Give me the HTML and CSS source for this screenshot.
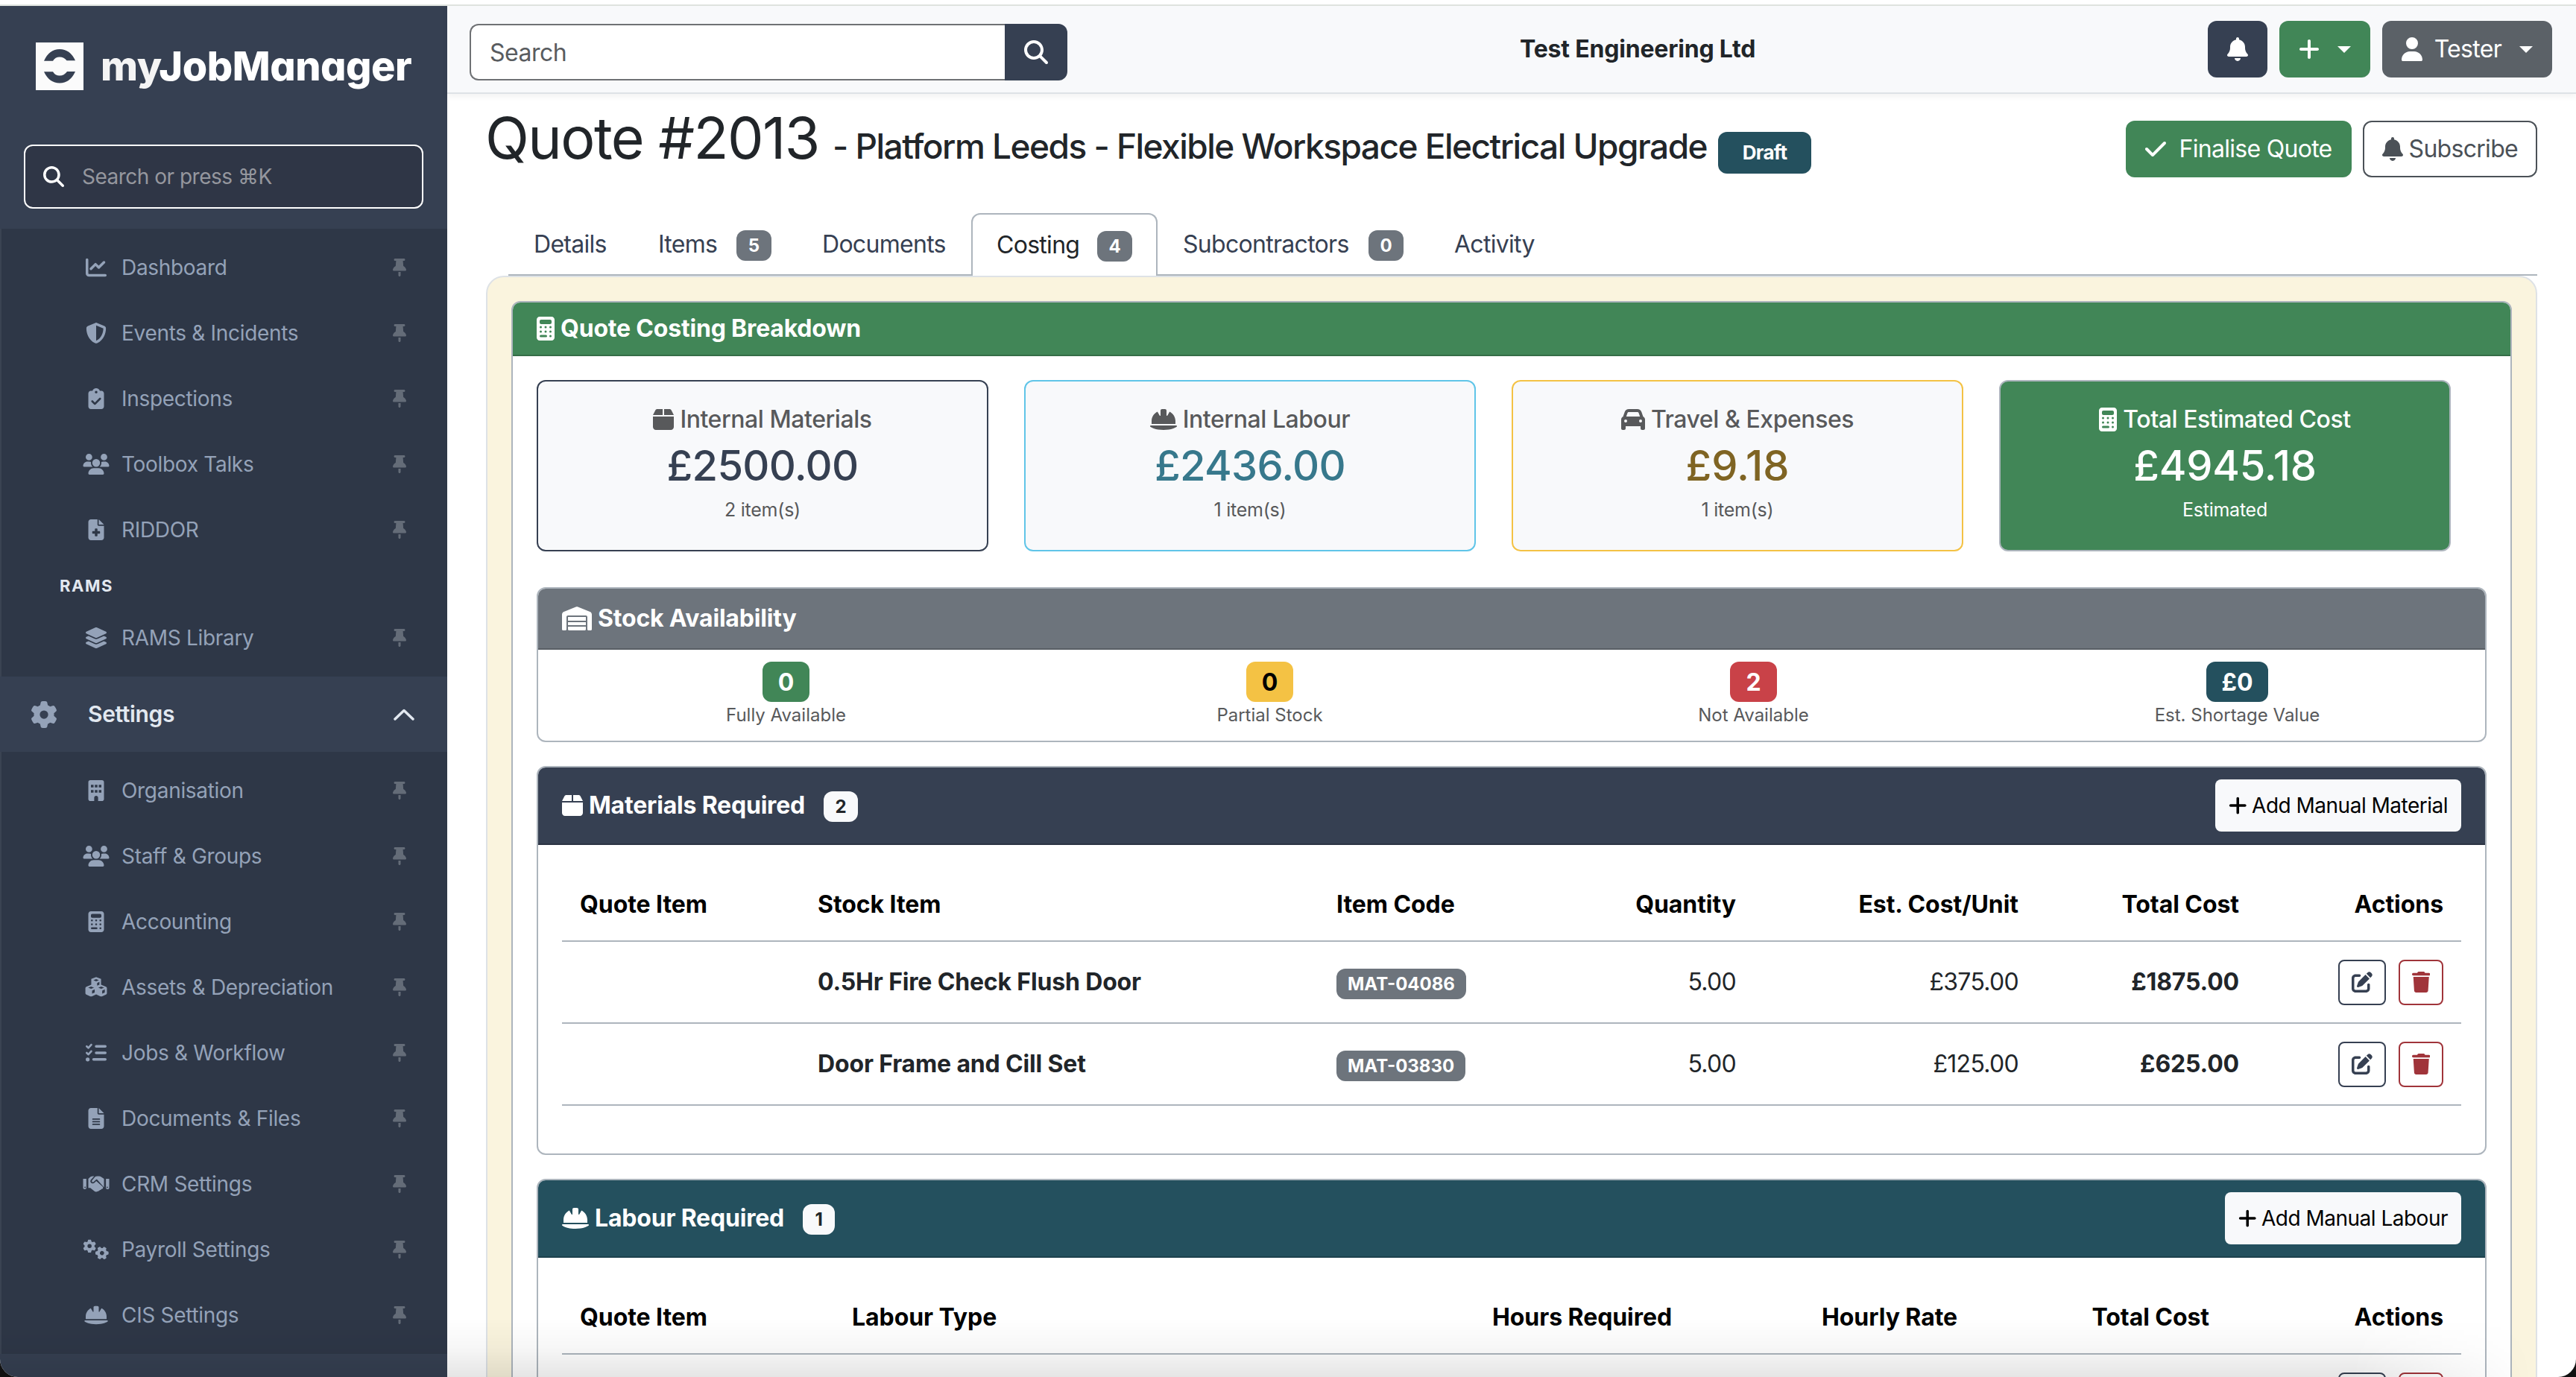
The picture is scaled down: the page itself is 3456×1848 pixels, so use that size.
FILE: index.html
```
<!DOCTYPE html>
<html lang="en">
<head>
    <meta charset="UTF-8">
    <meta name="viewport" content="width=device-width, initial-scale=1.0">
    <title>Quote #2013 - myJobManager</title>
    <link rel="stylesheet" href="styles.css">
</head>
<body>
    <!-- icon sprite -->
    <svg class="sprite">
        <symbol id="search" viewBox="0 0 512 512"><path d="M416 208c0 45.9-14.9 88.3-40 122.7L502.6 457.4c12.5 12.5 12.5 32.8 0 45.3s-32.8 12.5-45.3 0L330.7 376c-34.4 25.2-76.8 40-122.7 40C93.1 416 0 322.9 0 208S93.1 0 208 0S416 93.1 416 208zM208 352a144 144 0 1 0 0-288 144 144 0 1 0 0 288z"/></symbol>
        <symbol id="chart" viewBox="0 0 512 512"><path d="M64 64c0-17.7-14.3-32-32-32S0 46.3 0 64V400c0 44.2 35.8 80 80 80H480c17.7 0 32-14.3 32-32s-14.3-32-32-32H80c-8.8 0-16-7.2-16-16V64zm406.6 86.6c12.5-12.5 12.5-32.8 0-45.3s-32.8-12.5-45.3 0L320 210.7l-57.4-57.4c-12.5-12.5-32.8-12.5-45.3 0l-112 112c-12.5 12.5-12.5 32.8 0 45.3s32.8 12.5 45.3 0L240 221.3l57.4 57.4c12.5 12.5 32.8 12.5 45.3 0l128-128z"/></symbol>
        <symbol id="shield" viewBox="0 0 512 512"><path d="M256 0c4.6 0 9.2 1 13.4 2.9L457.7 82.8c22 9.3 38.4 31 38.3 57.2c-.5 99.2-41.3 280.7-213.6 363.2c-16.7 8-36.1 8-52.8 0C57.3 420.7 16.5 239.2 16 140c-.1-26.2 16.3-47.9 38.3-57.2L242.7 2.9C246.8 1 251.4 0 256 0zm0 66.8V444.8C394 378 431.1 230.1 432 141.4L256 66.8z"/></symbol>
        <symbol id="clipboard" viewBox="0 0 384 512"><path d="M192 0c-41.8 0-77.4 26.7-90.5 64H64C28.7 64 0 92.7 0 128V448c0 35.3 28.7 64 64 64H320c35.3 0 64-28.7 64-64V128c0-35.3-28.7-64-64-64H282.5C269.4 26.7 233.8 0 192 0zm0 64a32 32 0 1 1 0 64 32 32 0 1 1 0-64zM305 273L177 401c-9.4 9.4-24.6 9.4-33.9 0L79 337c-9.4-9.4-9.4-24.6 0-33.9s24.6-9.4 33.9 0l47 47L271 239c9.4-9.4 24.6-9.4 33.9 0s9.4 24.6 0 33.9z"/></symbol>
        <symbol id="users" viewBox="0 0 640 512"><path d="M144 0a80 80 0 1 1 0 160A80 80 0 1 1 144 0zM512 0a80 80 0 1 1 0 160A80 80 0 1 1 512 0zM0 298.7C0 239.8 47.8 192 106.7 192h42.7c15.9 0 31 3.5 44.6 9.7c-1.3 7.2-1.9 14.7-1.9 22.3c0 38.2 16.8 72.5 43.3 96H21.3C9.6 320 0 310.4 0 298.7zM405.3 320c26.6-23.5 43.3-57.8 43.3-96c0-7.6-.7-15-1.9-22.3c13.6-6.3 28.7-9.7 44.6-9.7h42.7C592.2 192 640 239.8 640 298.7c0 11.8-9.6 21.3-21.3 21.3H405.3zM224 224a96 96 0 1 1 192 0 96 96 0 1 1 -192 0zM128 485.3C128 411.7 187.7 352 261.3 352H378.7C452.3 352 512 411.7 512 485.3c0 14.7-11.9 26.7-26.7 26.7H154.7c-14.7 0-26.7-11.9-26.7-26.7z"/></symbol>
        <symbol id="file-plus" viewBox="0 0 384 512"><path d="M64 0C28.7 0 0 28.7 0 64V448c0 35.3 28.7 64 64 64H320c35.3 0 64-28.7 64-64V160H256c-17.7 0-32-14.3-32-32V0H64zM256 0V128H384L256 0zM160 240c0-8.8 7.2-16 16-16h32c8.8 0 16 7.2 16 16v48h48c8.8 0 16 7.2 16 16v32c0 8.8-7.2 16-16 16H224v48c0 8.8-7.2 16-16 16H176c-8.8 0-16-7.2-16-16V352H112c-8.8 0-16-7.2-16-16V304c0-8.8 7.2-16 16-16h48V240z"/></symbol>
        <symbol id="layers" viewBox="0 0 576 512"><path d="M264.5 5.2c14.9-6.9 32.1-6.9 47 0l218.6 101c8.5 3.9 13.9 12.4 13.9 21.8s-5.4 17.9-13.9 21.8l-218.6 101c-14.9 6.9-32.1 6.9-47 0L45.9 149.8C37.4 145.8 32 137.3 32 128s5.4-17.9 13.9-21.8L264.5 5.2zM476.9 209.6l53.2 24.6c8.5 3.9 13.9 12.4 13.9 21.8s-5.4 17.9-13.9 21.8l-218.6 101c-14.9 6.9-32.1 6.9-47 0L45.9 277.8C37.4 273.8 32 265.3 32 256s5.4-17.9 13.9-21.8l53.2-24.6 152 70.2c23.4 10.8 50.4 10.8 73.8 0l152-70.2zm-152 198.2l152-70.2 53.2 24.6c8.5 3.9 13.9 12.4 13.9 21.8s-5.4 17.9-13.9 21.8l-218.6 101c-14.9 6.9-32.1 6.9-47 0L45.9 405.8C37.4 401.8 32 393.3 32 384s5.4-17.9 13.9-21.8l53.2-24.6 152 70.2c23.4 10.8 50.4 10.8 73.8 0z"/></symbol>
        <symbol id="pin" viewBox="0 0 384 512"><path d="M32 32C32 14.3 46.3 0 64 0H320c17.7 0 32 14.3 32 32s-14.3 32-32 32H290.5l11.4 148.2c36.7 19.9 65.7 53.2 79.5 94.7l1 3c3.3 9.8 1.6 20.5-4.4 28.8s-15.7 13.3-26 13.3H32c-10.3 0-19.9-4.9-26-13.3s-7.7-19.1-4.4-28.8l1-3c13.8-41.5 42.8-74.8 79.5-94.7L93.5 64H64C46.3 64 32 49.7 32 32zM160 384h64v96c0 17.7-14.3 32-32 32s-32-14.3-32-32V384z"/></symbol>
        <symbol id="gear" viewBox="0 0 512 512"><path d="M495.9 166.6c3.2 8.7 .5 18.4-6.4 24.6l-43.3 39.4c1.1 8.3 1.7 16.8 1.7 25.4s-.6 17.1-1.7 25.4l43.3 39.4c6.9 6.2 9.6 15.9 6.4 24.6c-4.4 11.9-9.7 23.3-15.8 34.3l-4.7 8.1c-6.6 11-14 21.4-22.1 31.2c-5.9 7.2-15.7 9.6-24.5 6.8l-55.7-17.7c-13.4 10.3-28.2 18.9-44 25.4l-12.5 57.1c-2 9.1-9 16.3-18.2 17.8c-13.8 2.3-28 3.5-42.5 3.5s-28.7-1.2-42.5-3.5c-9.2-1.5-16.2-8.7-18.2-17.8l-12.5-57.1c-15.8-6.5-30.6-15.1-44-25.4L83.1 425.9c-8.8 2.8-18.6 .3-24.5-6.8c-8.1-9.8-15.5-20.2-22.1-31.2l-4.7-8.1c-6.1-11-11.4-22.4-15.8-34.3c-3.2-8.7-.5-18.4 6.4-24.6l43.3-39.4C64.6 273.1 64 264.6 64 256s.6-17.1 1.7-25.4L22.4 191.2c-6.9-6.2-9.6-15.9-6.4-24.6c4.4-11.9 9.7-23.3 15.8-34.3l4.7-8.1c6.6-11 14-21.4 22.1-31.2c5.9-7.2 15.7-9.6 24.5-6.8l55.7 17.7c13.4-10.3 28.2-18.9 44-25.4l12.5-57.1c2-9.1 9-16.3 18.2-17.8C227.3 1.2 241.5 0 256 0s28.7 1.2 42.5 3.5c9.2 1.5 16.2 8.7 18.2 17.8l12.5 57.1c15.8 6.5 30.6 15.1 44 25.4l55.7-17.7c8.8-2.8 18.6-.3 24.5 6.8c8.1 9.8 15.5 20.2 22.1 31.2l4.7 8.1c6.1 11 11.4 22.4 15.8 34.3zM256 336a80 80 0 1 0 0-160 80 80 0 1 0 0 160z"/></symbol>
        <symbol id="cogs" viewBox="0 0 640 512"><use href="#gear" x="-4" y="9" width="324" height="324"/><use href="#gear" x="301" y="179" width="324" height="324" transform="rotate(30 463 341)"/></symbol>
        <symbol id="building" viewBox="0 0 384 512"><path d="M48 0C21.5 0 0 21.5 0 48V464c0 26.5 21.5 48 48 48h96V432c0-26.5 21.5-48 48-48s48 21.5 48 48v80h96c26.5 0 48-21.5 48-48V48c0-26.5-21.5-48-48-48H48zM64 240h64v64H64zM160 240h64v64H160zM256 240h64v64H256zM64 112h64v64H64zM160 112h64v64H160zM256 112h64v64H256z"/></symbol>
        <symbol id="calculator" viewBox="0 0 384 512"><path d="M64 0C28.7 0 0 28.7 0 64V448c0 35.3 28.7 64 64 64H320c35.3 0 64-28.7 64-64V64c0-35.3-28.7-64-64-64H64zM96 64H288c17.7 0 32 14.3 32 32v32c0 17.7-14.3 32-32 32H96c-17.7 0-32-14.3-32-32V96c0-17.7 14.3-32 32-32zM88 200a24 24 0 1 1 0 48 24 24 0 1 1 0-48zM192 200a24 24 0 1 1 0 48 24 24 0 1 1 0-48zM296 200a24 24 0 1 1 0 48 24 24 0 1 1 0-48zM88 296a24 24 0 1 1 0 48 24 24 0 1 1 0-48zM192 296a24 24 0 1 1 0 48 24 24 0 1 1 0-48zM296 296a24 24 0 1 1 0 48 24 24 0 1 1 0-48zM88 392H200a24 24 0 1 1 0 48H88a24 24 0 1 1 0-48zM296 392a24 24 0 1 1 0 48 24 24 0 1 1 0-48z"/></symbol>
        <symbol id="cubes" viewBox="0 0 576 512"><path d="M288 4L408 52V190L528 240Q552 250 552 276V400Q552 424 530 434L430 478Q412 486 394 478L288 430L182 478Q164 486 146 478L46 434Q24 424 24 400V276Q24 250 48 240L168 190V52zM288 54L222 80L288 108L354 80zM312 150V214L368 190V124zM164 236L92 264L164 294L236 264zM188 336V412L252 384V308zM412 236L340 264L412 294L484 264zM436 336V412L500 384V308z"/></symbol>
        <symbol id="tasks" viewBox="0 0 512 512"><path d="M152 38c10 9 11 24 2 34L82 152a24 24 0 0 1-35 1L7 113a24 24 0 0 1 34-34l22 22 55-61c9-10 24-11 34-2zM152 198c10 9 11 24 2 34L82 312a24 24 0 0 1-35 1L7 273a24 24 0 0 1 34-34l22 22 55-61c9-10 24-11 34-2zM256 64H480a32 32 0 0 1 0 64H256a32 32 0 0 1 0-64zM256 224H480a32 32 0 0 1 0 64H256a32 32 0 0 1 0-64zM192 384H480a32 32 0 0 1 0 64H192a32 32 0 0 1 0-64zM48 368a48 48 0 1 1 0 96 48 48 0 1 1 0-96z"/></symbol>
        <symbol id="file-lines" viewBox="0 0 384 512"><path d="M64 0C28.7 0 0 28.7 0 64V448c0 35.3 28.7 64 64 64H320c35.3 0 64-28.7 64-64V160H256c-17.7 0-32-14.3-32-32V0H64zM256 0V128H384L256 0zM112 256H272a16 16 0 0 1 0 32H112a16 16 0 0 1 0-32zM112 320H272a16 16 0 0 1 0 32H112a16 16 0 0 1 0-32zM112 384H272a16 16 0 0 1 0 32H112a16 16 0 0 1 0-32z"/></symbol>
        <symbol id="handshake" viewBox="0 0 640 512"><path d="M0 128H80V352a32 32 0 0 1-32 32H32a32 32 0 0 1-32-32zM48 320a16 16 0 1 0 0 32 16 16 0 1 0 0-32zM560 128H640V352a32 32 0 0 1-32 32H592a32 32 0 0 1-32-32zM592 320a16 16 0 1 0 0 32 16 16 0 1 0 0-32zM128 128L176 84Q204 64 250 64H272L196 146C164 180 178 232 226 240Q256 244 280 222L322 184L478 322Q500 342 484 366Q470 382 448 378Q444 404 408 406Q396 432 362 434Q320 458 286 440L176 352H128zM290 84Q314 64 350 64H390Q420 64 444 80L512 128V336L344 148Q332 138 320 148L256 204Q234 218 218 200Q206 184 222 166z"/></symbol>
        <symbol id="helmet" viewBox="0 0 576 512"><path d="M256 32c-17.7 0-32 14.3-32 32v102c0 5.6-4.5 10-10 10c-3.6 0-7-1.9-8.8-5.1L157.1 87C83 123.5 32 199.8 32 288v64H544l0-66.4c-.9-87.2-51.7-162.4-125.1-198.6l-48 83.9c-1.8 3.2-5.2 5.1-8.8 5.1c-5.6 0-10.1-4.5-10.1-10.1V64c0-17.7-14.3-32-32-32H256zM16.6 384C7.4 384 0 391.4 0 400.6c0 4.7 2 9.2 5.8 11.9C27.5 428.4 111.8 480 288 480s260.5-51.6 282.2-67.5c3.8-2.8 5.8-7.2 5.8-11.9c0-9.2-7.4-16.6-16.6-16.6H16.6z"/></symbol>
        <symbol id="box" viewBox="0 0 448 512"><path d="M50.7 58.5L0 160H208V32H93.7C75.5 32 58.9 42.3 50.7 58.5zM240 160H448L397.3 58.5C389.1 42.3 372.5 32 354.3 32H240V160zm208 32H0V416c0 35.3 28.7 64 64 64H384c35.3 0 64-28.7 64-64V192z"/></symbol>
        <symbol id="car" viewBox="0 0 512 512"><path d="M135.2 117.4L109.1 192H402.9l-26.1-74.6C372.3 104.6 360.2 96 346.6 96H165.4c-13.6 0-25.7 8.6-30.2 21.4zM39.6 196.8L74.8 96.3C88.3 57.8 124.6 32 165.4 32H346.6c40.8 0 77.1 25.8 90.6 64.3l35.2 100.5c23.2 9.6 39.6 32.5 39.6 59.2V448c0 17.7-14.3 32-32 32H448c-17.7 0-32-14.3-32-32V400H96v48c0 17.7-14.3 32-32 32H32c-17.7 0-32-14.3-32-32V256c0-26.7 16.4-49.6 39.6-59.2zM128 288a32 32 0 1 0 -64 0 32 32 0 1 0 64 0zm288 32a32 32 0 1 0 0-64 32 32 0 1 0 0 64z"/></symbol>
        <symbol id="warehouse" viewBox="0 0 640 512"><path d="M0 488V171.3c0-26.2 15.9-49.7 40.2-59.4L308.1 4.8c7.6-3.1 16.1-3.1 23.8 0L599.8 111.9c24.3 9.7 40.2 33.3 40.2 59.4V488c0 13.3-10.7 24-24 24H568c-13.3 0-24-10.7-24-24V224c0-17.7-14.3-32-32-32H128c-17.7 0-32 14.3-32 32V488c0 13.3-10.7 24-24 24H24c-13.3 0-24-10.7-24-24zm488 24l-336 0c-13.3 0-24-10.7-24-24V432H512l0 56c0 13.3-10.7 24-24 24zM128 400V336H512v64H128zm0-96V224H512l0 80H128z"/></symbol>
        <symbol id="bell" viewBox="0 0 448 512"><path d="M224 0c-17.7 0-32 14.3-32 32V51.2C119 66 64 130.6 64 208v18.8c0 47-17.3 92.4-48.5 127.6l-7.4 8.3c-8.4 9.4-10.4 22.9-5.3 34.4S19.4 416 32 416H416c12.6 0 24-7.4 29.2-18.9s3.1-25-5.3-34.4l-7.4-8.3C401.3 319.2 384 273.9 384 226.8V208c0-77.4-55-142-128-156.8V32c0-17.7-14.3-32-32-32zm45.3 493.3c12-12 18.7-28.3 18.7-45.3H160c0 17 6.7 33.3 18.7 45.3s28.3 18.7 45.3 18.7s33.3-6.7 45.3-18.7z"/></symbol>
        <symbol id="user" viewBox="0 0 448 512"><path d="M224 256A128 128 0 1 0 224 0a128 128 0 1 0 0 256zm-45.7 48C79.8 304 0 383.8 0 482.3C0 498.7 13.3 512 29.7 512H418.3c16.4 0 29.7-13.3 29.7-29.7C448 383.8 368.2 304 269.7 304H178.3z"/></symbol>
        <symbol id="plus" viewBox="0 0 448 512"><path d="M256 80c0-17.7-14.3-32-32-32s-32 14.3-32 32V224H48c-17.7 0-32 14.3-32 32s14.3 32 32 32H192V432c0 17.7 14.3 32 32 32s32-14.3 32-32V288H400c17.7 0 32-14.3 32-32s-14.3-32-32-32H256V80z"/></symbol>
        <symbol id="check" viewBox="0 0 448 512"><path d="M438.6 105.4c12.5 12.5 12.5 32.8 0 45.3l-256 256c-12.5 12.5-32.8 12.5-45.3 0l-128-128c-12.5-12.5-12.5-32.8 0-45.3s32.8-12.5 45.3 0L160 338.7 393.4 105.4c12.5-12.5 32.8-12.5 45.3 0z"/></symbol>
        <symbol id="trash" viewBox="0 0 448 512"><path d="M135.2 17.7L128 32H32C14.3 32 0 46.3 0 64S14.3 96 32 96H416c17.7 0 32-14.3 32-32s-14.3-32-32-32H320l-7.2-14.3C307.4 6.8 296.3 0 284.2 0H163.8c-12.1 0-23.2 6.8-28.6 17.7zM416 128H32L53.2 467c1.6 25.3 22.6 45 47.9 45H346.9c25.3 0 46.3-19.7 47.9-45L416 128z"/></symbol>
        <symbol id="edit" viewBox="0 0 512 512"><path d="M471.6 21.7c-21.9-21.9-57.3-21.9-79.2 0L362.3 51.7l97.9 97.9 30.1-30.1c21.9-21.9 21.9-57.3 0-79.2L471.6 21.7zm-299.2 220c-6.1 6.1-10.8 13.6-13.5 21.9l-29.6 88.8c-2.9 8.6-.6 18.1 5.8 24.6s15.9 8.7 24.6 5.8l88.8-29.6c8.2-2.7 15.7-7.4 21.9-13.5L437.7 172.3 339.7 74.3 172.4 241.7zM96 64C43 64 0 107 0 160V416c0 53 43 96 96 96H352c53 0 96-43 96-96V320c0-17.7-14.3-32-32-32s-32 14.3-32 32v96c0 17.7-14.3 32-32 32H96c-17.7 0-32-14.3-32-32V160c0-17.7 14.3-32 32-32h96c17.7 0 32-14.3 32-32s-14.3-32-32-32H96z"/></symbol>
    </svg>

    <div class="app">
        <aside class="sidebar">
            <div class="sidebar-header">
                <div class="brand">
                    <svg class="brand-mark" viewBox="0 0 64 64"><path d="M11 24.7Q18 9 32 9T53 24.3H41.5Q38 19.5 32 19.5T23 24.7zM11 39.3H23Q26 44.5 32 44.5T42 39H53Q46 54.5 32 54.5T11 39.3z"/></svg>
                    <span class="brand-name"><span class="brand-my">my</span>JobManager</span>
                </div>
                <div class="sidebar-search"><svg class="icon"><use href="#search"/></svg><span>Search or press ⌘K</span></div>
            </div>

            <ul class="menu">
                <li><svg class="icon"><use href="#chart"/></svg><span>Dashboard</span><svg class="pin"><use href="#pin"/></svg></li>
                <li><svg class="icon"><use href="#shield"/></svg><span>Events &amp; Incidents</span><svg class="pin"><use href="#pin"/></svg></li>
                <li><svg class="icon"><use href="#clipboard"/></svg><span>Inspections</span><svg class="pin"><use href="#pin"/></svg></li>
                <li><svg class="icon"><use href="#users"/></svg><span>Toolbox Talks</span><svg class="pin"><use href="#pin"/></svg></li>
                <li><svg class="icon"><use href="#file-plus"/></svg><span>RIDDOR</span><svg class="pin"><use href="#pin"/></svg></li>
                <li class="menu-label">RAMS</li>
                <li><svg class="icon"><use href="#layers"/></svg><span>RAMS Library</span><svg class="pin"><use href="#pin"/></svg></li>
            </ul>

            <div class="menu-section">
                <svg class="icon"><use href="#gear"/></svg>
                <span>Settings</span>
                <svg class="chevron" viewBox="0 0 28 16"><path d="M2 14L14 2.5L26 14"/></svg>
            </div>

            <ul class="menu">
                <li><svg class="icon"><use href="#building"/></svg><span>Organisation</span><svg class="pin"><use href="#pin"/></svg></li>
                <li><svg class="icon"><use href="#users"/></svg><span>Staff &amp; Groups</span><svg class="pin"><use href="#pin"/></svg></li>
                <li><svg class="icon"><use href="#calculator"/></svg><span>Accounting</span><svg class="pin"><use href="#pin"/></svg></li>
                <li><svg class="icon"><use href="#cubes"/></svg><span>Assets &amp; Depreciation</span><svg class="pin"><use href="#pin"/></svg></li>
                <li><svg class="icon"><use href="#tasks"/></svg><span>Jobs &amp; Workflow</span><svg class="pin"><use href="#pin"/></svg></li>
                <li><svg class="icon"><use href="#file-lines"/></svg><span>Documents &amp; Files</span><svg class="pin"><use href="#pin"/></svg></li>
                <li><svg class="icon"><use href="#handshake"/></svg><span>CRM Settings</span><svg class="pin"><use href="#pin"/></svg></li>
                <li><svg class="icon"><use href="#cogs"/></svg><span>Payroll Settings</span><svg class="pin"><use href="#pin"/></svg></li>
                <li><svg class="icon"><use href="#helmet"/></svg><span>CIS Settings</span><svg class="pin"><use href="#pin"/></svg></li>
            </ul>
        </aside>

        <main class="main">
            <header class="topbar">
                <div class="search-group">
                    <div class="search-input">Search</div>
                    <button class="search-button"><svg class="icon"><use href="#search"/></svg></button>
                </div>
                <div class="company">Test Engineering Ltd</div>
                <div class="topbar-actions">
                    <button class="btn btn-primary"><svg class="icon narrow"><use href="#bell"/></svg></button>
                    <button class="btn btn-success"><svg class="icon narrow"><use href="#plus"/></svg><i class="caret"></i></button>
                    <button class="btn btn-grey"><svg class="icon narrow"><use href="#user"/></svg><span class="user-name">Tester</span><i class="caret"></i></button>
                </div>
            </header>

            <div class="page">
                <div class="page-head">
                    <h1>Quote #2013</h1>
                    <span class="subtitle">- Platform Leeds - Flexible Workspace Electrical Upgrade</span>
                    <span class="status">Draft</span>
                    <div class="page-actions">
                        <button class="btn btn-success finalise"><svg class="icon narrow"><use href="#check"/></svg>Finalise Quote</button>
                        <button class="btn btn-outline"><svg class="icon narrow"><use href="#bell"/></svg>Subscribe</button>
                    </div>
                </div>

                <nav class="tabs">
                    <a class="tab tab-details">Details</a>
                    <a class="tab tab-items">Items <span class="badge">5</span></a>
                    <a class="tab tab-documents">Documents</a>
                    <a class="tab tab-costing active">Costing <span class="badge">4</span></a>
                    <a class="tab tab-subs">Subcontractors <span class="badge">0</span></a>
                    <a class="tab">Activity</a>
                </nav>

                <div class="tab-panel">
                    <section class="card breakdown">
                        <div class="card-header green"><svg class="icon narrow3"><use href="#calculator"/></svg>Quote Costing Breakdown</div>
                        <div class="breakdown-body">
                            <div class="metrics">
                                <div class="metric metric-primary">
                                    <div class="metric-title"><svg class="icon narrow"><use href="#box"/></svg>Internal Materials</div>
                                    <div class="metric-value">£2500.00</div>
                                    <div class="metric-note">2 item(s)</div>
                                </div>
                                <div class="metric metric-info">
                                    <div class="metric-title"><svg class="icon wide"><use href="#helmet"/></svg>Internal Labour</div>
                                    <div class="metric-value">£2436.00</div>
                                    <div class="metric-note">1 item(s)</div>
                                </div>
                                <div class="metric metric-warning">
                                    <div class="metric-title"><svg class="icon"><use href="#car"/></svg>Travel &amp; Expenses</div>
                                    <div class="metric-value">£9.18</div>
                                    <div class="metric-note">1 item(s)</div>
                                </div>
                                <div class="metric metric-total">
                                    <div class="metric-title"><svg class="icon narrow3"><use href="#calculator"/></svg>Total Estimated Cost</div>
                                    <div class="metric-value">£4945.18</div>
                                    <div class="metric-note">Estimated</div>
                                </div>
                            </div>

                            <section class="card stock">
                                <div class="card-header grey"><svg class="icon wider"><use href="#warehouse"/></svg>Stock Availability</div>
                                <div class="stock-row">
                                    <div class="stock-cell"><span class="count green">0</span><span>Fully Available</span></div>
                                    <div class="stock-cell"><span class="count yellow">0</span><span>Partial Stock</span></div>
                                    <div class="stock-cell"><span class="count red">2</span><span>Not Available</span></div>
                                    <div class="stock-cell"><span class="count teal">£0</span><span>Est. Shortage Value</span></div>
                                </div>
                            </section>

                            <section class="card materials">
                                <div class="card-header navy">
                                    <svg class="icon narrow"><use href="#box"/></svg>Materials Required
                                    <span class="badge light">2</span>
                                    <button class="btn-small"><svg class="icon narrow"><use href="#plus"/></svg>Add Manual Material</button>
                                </div>
                                <table class="table materials-table">
                                    <colgroup><col class="m1"><col class="m2"><col class="m3"><col class="m4"><col class="m5"><col class="m6"><col class="m7"></colgroup>
                                    <thead>
                                        <tr><th>Quote Item</th><th>Stock Item</th><th>Item Code</th><th class="end">Quantity</th><th class="end">Est. Cost/Unit</th><th class="end">Total Cost</th><th class="end">Actions</th></tr>
                                    </thead>
                                    <tbody>
                                        <tr>
                                            <td></td><td><b>0.5Hr Fire Check Flush Door</b></td><td><span class="badge code">MAT-04086</span></td>
                                            <td class="end">5.00</td><td class="end">£375.00</td><td class="end"><b>£1875.00</b></td>
                                            <td><div class="row-actions"><button class="act edit"><svg class="icon"><use href="#edit"/></svg></button><button class="act delete"><svg class="icon narrow"><use href="#trash"/></svg></button></div></td>
                                        </tr>
                                        <tr>
                                            <td></td><td><b>Door Frame and Cill Set</b></td><td><span class="badge code">MAT-03830</span></td>
                                            <td class="end">5.00</td><td class="end">£125.00</td><td class="end"><b>£625.00</b></td>
                                            <td><div class="row-actions"><button class="act edit"><svg class="icon"><use href="#edit"/></svg></button><button class="act delete"><svg class="icon narrow"><use href="#trash"/></svg></button></div></td>
                                        </tr>
                                    </tbody>
                                </table>
                            </section>

                            <section class="card labour">
                                <div class="card-header teal">
                                    <svg class="icon wide"><use href="#helmet"/></svg>Labour Required
                                    <span class="badge light">1</span>
                                    <button class="btn-small"><svg class="icon narrow"><use href="#plus"/></svg>Add Manual Labour</button>
                                </div>
                                <table class="table labour-table">
                                    <colgroup><col class="l1"><col class="l2"><col class="l3"><col class="l4"><col class="l5"><col class="l6"></colgroup>
                                    <thead>
                                        <tr><th>Quote Item</th><th>Labour Type</th><th class="end">Hours Required</th><th class="end">Hourly Rate</th><th class="end">Total Cost</th><th class="end">Actions</th></tr>
                                    </thead>
                                    <tbody>
                                        <tr>
                                            <td></td><td></td><td></td><td></td><td></td>
                                            <td><div class="row-actions"><button class="act edit"><svg class="icon"><use href="#edit"/></svg></button><button class="act delete"><svg class="icon narrow"><use href="#trash"/></svg></button></div></td>
                                        </tr>
                                    </tbody>
                                </table>
                            </section>
                        </div>
                    </section>
                </div>
            </div>
        </main>
        <div class="bottom-shade"></div>
    </div>
</body>
</html>
```
FILE: styles.css
```
* {
    box-sizing: border-box;
}
body {
    margin: 0;
    overflow: hidden;
    background-color: #111;
    color: #212529;
    font-family: Inter, "Liberation Sans", sans-serif;
    font-size: 32px;
    line-height: 1.5;
    letter-spacing: -0.022em;
}
button {
    font: inherit;
    letter-spacing: inherit;
    padding: 0;
    border: none;
}
.sprite {
    display: none;
}
.icon {
    width: 1em;
    height: 1em;
    flex: none;
    fill: currentColor;
    fill-rule: evenodd;
}
.icon.narrow {
    width: 0.875em;
}
.icon.narrow3 {
    width: 0.75em;
}
.icon.wide {
    width: 1.125em;
}
.icon.wider {
    width: 1.25em;
}
.app {
    display: flex;
    position: relative;
    height: 1848px;
    padding-top: 6px;
    overflow: hidden;
    background-color: #fff;
    border-radius: 0 0 24px 24px;
}

/* Sidebar */
.sidebar {
    width: 600px;
    flex: none;
    background-color: #364052;
    border-top: 2px solid #dfe3df;
    color: #94a2b8;
    font-size: 28px;
    letter-spacing: -0.011em;
}
.sidebar-header {
    height: 299px;
    padding: 49px 32px 0;
}
.brand {
    display: flex;
    align-items: center;
    height: 64px;
    padding-left: 16px;
}
.brand-mark {
    width: 64px;
    height: 64px;
    background-color: #fbfbfb;
    fill: #364052;
}
.brand-name {
    margin-left: 23px;
    color: #fff;
    font-size: 54px;
    font-weight: 800;
    line-height: 60px;
    letter-spacing: -0.008em;
    font-feature-settings: "cv11";
}
.brand-my {
    color: #f4f4f4;
}
.sidebar-search {
    display: flex;
    align-items: center;
    height: 86px;
    margin-top: 73px;
    padding-left: 24px;
    border: 2px solid #fff;
    border-radius: 12px;
    background-color: #2f3646;
    color: #95979e;
    gap: 24px;
    letter-spacing: -0.018em;
}
.sidebar-search .icon {
    color: #fff;
}
.menu {
    margin: 0;
    padding: 8px 0;
    list-style: none;
    background-color: #2e3747;
    box-shadow: inset 2px 0 #3a4352;
}
.menu li {
    display: flex;
    align-items: center;
    height: 88px;
    padding: 0 54px 0 111px;
}
.menu li .icon {
    width: 36px;
}
.menu li span {
    flex: 1;
    margin-left: 16px;
}
.pin {
    width: 18px;
    height: 24px;
    fill: #646c78;
    margin-right: 1px;
}
.menu li.menu-label {
    height: 57px;
    padding: 5px 0 0 80px;
    color: #e2e8f0;
    font-size: 22px;
    font-weight: 700;
    letter-spacing: 0.07em;
}
.menu-section {
    display: flex;
    align-items: center;
    height: 101px;
    padding: 0 44px 0 41px;
    color: #e2e8f0;
    font-size: 30px;
    font-weight: 600;
    letter-spacing: -0.012em;
}
.menu-section .icon {
    width: 36px;
    height: 38px;
    color: #94a2b8;
}
.menu-section span {
    flex: 1;
    margin-left: 41px;
}
.chevron {
    width: 28px;
    height: 16px;
    fill: none;
    stroke: #e2e8f0;
    stroke-width: 3.5;
    stroke-linecap: round;
    stroke-linejoin: round;
}

/* Top bar */
.main {
    flex: 1;
    min-width: 0;
}
.topbar {
    display: flex;
    align-items: flex-start;
    height: 120px;
    padding: 24px 32px 0 30px;
    border-top: 2px solid #dfe3df;
    border-bottom: 2px solid #dee2e6;
    background-color: #f8f9fb;
    box-shadow: 0 4px 8px rgba(0, 0, 0, 0.05);
}
.search-group {
    display: flex;
    width: 802px;
    height: 76px;
}
.search-input {
    flex: 1;
    padding-left: 25px;
    border: 2px solid #6f7174;
    border-right: none;
    border-radius: 12px 0 0 12px;
    background-color: #fff;
    color: #595c5f;
    line-height: 73px;
    letter-spacing: -0.015em;
}
.search-button {
    width: 84px;
    border-radius: 0 12px 12px 0;
    background-color: #364052;
    color: #fff;
    font-size: 32px;
}
.search-button .icon {
    display: block;
    margin: auto;
}
.company {
    width: 320px;
    margin-left: 607px;
    font-weight: 700;
    line-height: 68px;
    letter-spacing: -0.006em;
    white-space: nowrap;
}
.topbar-actions {
    display: flex;
    gap: 16px;
    margin-top: -4px;
    margin-left: auto;
}
.btn {
    display: flex;
    align-items: center;
    height: 76px;
    padding: 0 26px;
    border-radius: 12px;
    color: #fff;
    white-space: nowrap;
}
.btn-primary {
    background-color: #364052;
}
.btn-success {
    background-color: #418657;
}
.btn-grey {
    background-color: #5b6167;
}
.btn-outline {
    border: 2px solid #4b5157;
    background-color: #fff;
    color: #4b5157;
    padding: 0 24px;
}
.caret {
    margin-left: 24px;
    border-top: 9px solid #fff;
    border-left: 9px solid transparent;
    border-right: 9px solid transparent;
}
.user-name {
    margin-left: 16px;
}

/* Page heading */
.page {
    padding: 0 52px;
}
.page-head {
    display: flex;
    height: 160px;
    white-space: nowrap;
}
h1 {
    width: 447px;
    margin: 11px 0 0 -1px;
    font-size: 77px;
    font-weight: 400;
    line-height: 96px;
    letter-spacing: -0.02em;
}
.subtitle {
    width: 1187px;
    margin: 34px 0 0 19px;
    font-size: 46px;
    font-weight: 500;
    line-height: 72px;
    letter-spacing: -0.033em;
}
.status {
    width: 125px;
    height: 56px;
    margin-top: 51px;
    margin-left: 1px;
    border-radius: 12px;
    background-color: #24505e;
    color: #fff;
    font-size: 26px;
    font-weight: 700;
    line-height: 56px;
    text-align: center;
}
.page-actions {
    display: flex;
    gap: 15px;
    margin-top: 36px;
    margin-left: auto;
}
.finalise .icon {
    margin-right: 17px;
}
.btn-outline .icon {
    margin-right: 8px;
}

/* Tabs */
.tabs {
    display: flex;
    height: 84px;
    margin-left: 30px;
    box-shadow: inset 0 -2px #adb5bd;
}
.tab {
    display: flex;
    align-items: center;
    padding: 0 0 0 34px;
    color: #364052;
    white-space: nowrap;
}
.tab-details {
    width: 167px;
}
.tab-items {
    width: 220px;
}
.tab-documents {
    width: 234px;
}
.tab-costing {
    width: 250px;
}
.tab-subs {
    width: 364px;
}
.tab.active {
    padding-left: 32px;
    border: 2px solid #adb5bd;
    border-bottom: none;
    border-radius: 12px 12px 0 0;
    background-color: #fff;
    color: #212529;
}
.badge {
    display: inline-block;
    height: 41px;
    padding: 0 15px;
    border-radius: 12px;
    background-color: #6d747c;
    color: #fff;
    font-size: 24px;
    font-weight: 700;
    line-height: 41px;
    letter-spacing: 0;
}
.tab .badge {
    width: 47px;
    margin: 3px 34px 0 auto;
    text-align: center;
}
.tab.active .badge {
    margin-right: 32px;
}

/* Cards */
.tab-panel {
    height: 1500px;
    padding: 32px;
    border: 2px solid #dee2e6;
    border-radius: 24px 24px 0 0;
    background-color: #faf4de;
}
.card {
    border: 2px solid #adb5bd;
    border-radius: 12px;
    background-color: #fff;
    overflow: hidden;
}
.breakdown {
    height: 1600px;
}
.card-header {
    display: flex;
    align-items: center;
    padding: 0 32px;
    border-bottom: 2px solid rgba(0, 0, 0, 0.18);
    color: #fff;
    font-weight: 700;
    letter-spacing: -0.006em;
}
.card-header > .icon {
    margin-right: 8px;
}
.breakdown > .card-header {
    height: 72px;
}
.green {
    background-color: #418657;
}
.grey {
    background-color: #6d747c;
}
.navy {
    background-color: #364052;
}
.teal {
    background-color: #24505e;
}
.yellow {
    background-color: #f4c244;
}
.red {
    background-color: #c94248;
}
.breakdown-body {
    padding: 32px;
}
.metrics {
    display: flex;
    gap: 48px;
}
.metric {
    width: 606px;
    height: 230px;
    padding-top: 27px;
    border: 2px solid #364052;
    border-radius: 12px;
    background-color: #f8f9fb;
    color: #58595b;
    text-align: center;
}
.metric-title {
    display: flex;
    align-items: center;
    justify-content: center;
    height: 48px;
    font-weight: 500;
    letter-spacing: -0.014em;
}
.metric-title .icon {
    margin-right: 8px;
}
.metric-value {
    height: 68px;
    margin-top: 4px;
    font-size: 56px;
    font-weight: 500;
    line-height: 68px;
}
.metric-note {
    margin-top: 7px;
    font-size: 25px;
    line-height: 36px;
    letter-spacing: -0.01em;
}
.metric-primary .metric-value {
    color: #364052;
}
.metric-info {
    border-color: #60c5e8;
}
.metric-info .metric-value {
    color: #37788c;
}
.metric-warning {
    border-color: #f4c244;
}
.metric-warning .metric-value {
    color: #7f6423;
    letter-spacing: 0;
}
.metric-total {
    border-color: #adb5bd;
    background-color: #418657;
    color: #fff;
}
.metric-total .metric-value {
    letter-spacing: -0.004em;
}
.stock {
    height: 208px;
    margin-top: 48px;
}
.stock .card-header {
    height: 82px;
}
.stock-row {
    display: flex;
    padding: 16px 8px 0;
}
.stock-cell {
    display: flex;
    flex: 1;
    flex-direction: column;
    align-items: center;
    color: #58595b;
    font-size: 24px;
    line-height: 36px;
    letter-spacing: 0;
}
.count {
    height: 54px;
    min-width: 63px;
    padding: 0 20px;
    border-radius: 12px;
    color: #fff;
    font-size: 32px;
    font-weight: 700;
    line-height: 55px;
    text-align: center;
}
.count.yellow {
    color: #000;
}
.materials {
    height: 522px;
    margin-top: 32px;
}
.labour {
    height: 500px;
    margin-top: 32px;
}
.materials .card-header,
.labour .card-header {
    height: 104px;
}
.badge.light {
    width: 46px;
    margin: 3px 0 0 25px;
    padding: 0;
    background-color: #f8f9fb;
    color: #212529;
    text-align: center;
}
.labour .badge.light {
    width: 43px;
}
.btn-small {
    display: flex;
    align-items: center;
    height: 70px;
    margin-left: auto;
    padding: 0 18px;
    border-radius: 8px;
    background-color: #f8f9fb;
    color: #000;
    font-size: 28px;
    font-weight: 400;
    letter-spacing: -0.018em;
    white-space: nowrap;
}
.btn-small .icon {
    margin-right: 7px;
}

/* Tables */
.table {
    width: 2548px;
    margin: 32px 32px 0;
    border-collapse: separate;
    border-spacing: 0;
    table-layout: fixed;
}
.table th,
.table td {
    padding: 0 24px;
    border-bottom: 2px solid #adb5bd;
    text-align: left;
    white-space: nowrap;
}
.table th {
    height: 98px;
    color: #000;
    font-weight: 700;
    letter-spacing: -0.002em;
}
.table td {
    height: 110px;
}
.table .end {
    text-align: right;
}
.table b {
    font-weight: 700;
    letter-spacing: -0.005em;
}
.m1 {
    width: 319px;
}
.m2 {
    width: 696px;
}
.m3 {
    width: 341px;
}
.m4 {
    width: 243px;
}
.m5 {
    width: 379px;
}
.m6 {
    width: 296px;
}
.l1 {
    width: 365px;
}
.l2 {
    width: 700px;
}
.l3 {
    width: 448px;
}
.l4 {
    width: 383px;
}
.l5 {
    width: 338px;
}
.badge.code {
    display: block;
    width: max-content;
    margin-top: 5px;
}
.row-actions {
    display: flex;
    justify-content: flex-end;
    gap: 17px;
}
.act {
    display: flex;
    align-items: center;
    height: 61px;
    padding: 0 16px;
    border: 2px solid #364052;
    border-radius: 8px;
    background-color: #fff;
    color: #364052;
    font-size: 28px;
}
.act.delete {
    border-color: #a0343a;
    color: #a0343a;
}

/* Soft shade along the bottom edge of the window */
.bottom-shade {
    position: absolute;
    left: 0;
    right: 60px;
    bottom: 0;
    height: 80px;
    background: linear-gradient(to bottom, rgba(0, 0, 0, 0), rgba(0, 0, 0, 0.03) 50%, rgba(0, 0, 0, 0.1));
    -webkit-mask-image: linear-gradient(to left, transparent, #000 240px);
    mask-image: linear-gradient(to left, transparent, #000 240px);
    pointer-events: none;
}
```
